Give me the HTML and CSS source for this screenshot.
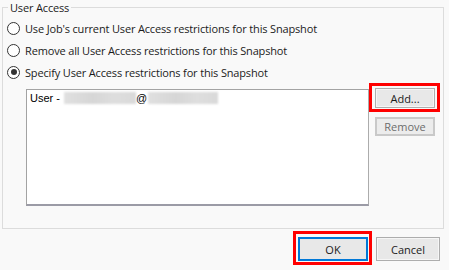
FILE: index.html
```html
<!DOCTYPE html>
<html lang="en">
<head>
  <meta charset="UTF-8" />
  <title>User Access</title>
  <link rel="stylesheet" href="styles.css">
</head>
<body>
  <div class="dialog">
    <fieldset class="group">
      <legend>User Access</legend>

      <label class="radio-row">
        <span class="radio"></span>
        <span>Use Job's current User Access restrictions for this Snapshot</span>
      </label>
      <label class="radio-row">
        <span class="radio"></span>
        <span>Remove all User Access restrictions for this Snapshot</span>
      </label>
      <label class="radio-row">
        <span class="radio checked"></span>
        <span>Specify User Access restrictions for this Snapshot</span>
      </label>

      <div class="users">
        <div class="listbox">
          <div class="list-item">
            <span>User - </span><span class="blur blur-name"></span><span>@</span><span class="blur blur-domain"></span>
          </div>
        </div>
        <div class="side">
          <div class="highlight highlight-add">
            <button class="btn btn-add">Add...</button>
          </div>
          <button class="btn btn-remove">Remove</button>
        </div>
      </div>
    </fieldset>

    <div class="footer">
      <div class="highlight highlight-ok">
        <button class="btn btn-ok">OK</button>
      </div>
      <button class="btn btn-cancel">Cancel</button>
    </div>
  </div>
</body>
</html>
```

FILE: styles.css
```css
body {
  margin: 0;
  background: #f9f9f9;
  font-family: 'Open Sans', sans-serif;
  font-size: 11px;
  letter-spacing: -0.16px;
  color: #1b1b1b;
  width: 449px;
  height: 270px;
  overflow: hidden;
}

.dialog {
  display: flex;
  flex-direction: column;
  padding: 0 5px 0 2px;
}

.group {
  margin: 0;
  padding: 0;
  border: 1px solid #dcdcdc;
  height: 229px;
  box-sizing: border-box;
}

.group legend {
  margin-left: 5px;
  padding: 0 2px;
  line-height: 15px;
}

.radio-row {
  display: flex;
  align-items: center;
  gap: 5px;
  height: 22px;
  padding-left: 4px;
}

.radio-row:first-of-type {
  margin-top: 2px;
}

.radio {
  width: 11px;
  height: 11px;
  border: 1px solid #333;
  border-radius: 50%;
  background: #fff;
  position: relative;
  flex: none;
}

.radio.checked::after {
  content: "";
  position: absolute;
  left: 2.5px;
  top: 2.5px;
  width: 6px;
  height: 6px;
  border-radius: 50%;
  background: #333;
}

.users {
  display: flex;
  align-items: flex-start;
  padding-left: 23px;
}

.listbox {
  margin-top: 6px;
  width: 343px;
  height: 117px;
  box-sizing: border-box;
  background: #fff;
  border: 1px solid #a3a3a3;
  border-bottom: 2px solid #9b9ba6;
  border-right-color: #acacac;
}

.list-item {
  display: flex;
  align-items: center;
  height: 14px;
  margin-top: 1px;
  padding-left: 3px;
  font-family: 'Liberation Sans', sans-serif;
  font-size: 11px;
  letter-spacing: 0;
  color: #000;
  white-space: pre;
}

.blur {
  display: inline-block;
  height: 12px;
  background: linear-gradient(90deg, #e0e0e0, #d6d6d6 40%, #dedede 70%, #d9d9d9);
  filter: blur(1px);
}

.blur-name {
  width: 72px;
  margin-left: 1px;
}

.blur-domain {
  width: 70px;
  margin-left: 1px;
}

.side {
  display: flex;
  flex-direction: column;
  align-items: flex-start;
}

.highlight {
  border: 3px solid #f00;
  display: flex;
}

.highlight-add {
  padding: 2px 2px 1px 3px;
}

.btn {
  font-family: 'Open Sans', sans-serif;
  font-size: 11px;
  color: #1b1b1b;
  background: #e8e8e8;
  border: 1px solid #adadad;
  box-shadow: inset 0 0 0 1px #f6f6f6;
  padding: 0;
  margin: 0;
  box-sizing: border-box;
}

.btn-add {
  width: 60px;
  height: 20px;
}

.btn-remove {
  width: 60px;
  height: 19px;
  margin: 5px 0 0 6px;
  color: #6d6d6d;
  background: #ececec;
  border: 2px solid #c9c9c9;
  box-shadow: none;
}

.footer {
  display: flex;
  justify-content: flex-end;
  align-items: flex-start;
  margin-top: 2px;
  gap: 4px;
  padding-right: 4px;
}

.highlight-ok {
  padding: 3px 1px 1px 2px;
}

.btn-ok {
  width: 70px;
  height: 24px;
  border: 2px solid #0078d7;
  box-shadow: none;
}

.btn-cancel {
  width: 64px;
  height: 24px;
  margin-top: 6px;
}
```
